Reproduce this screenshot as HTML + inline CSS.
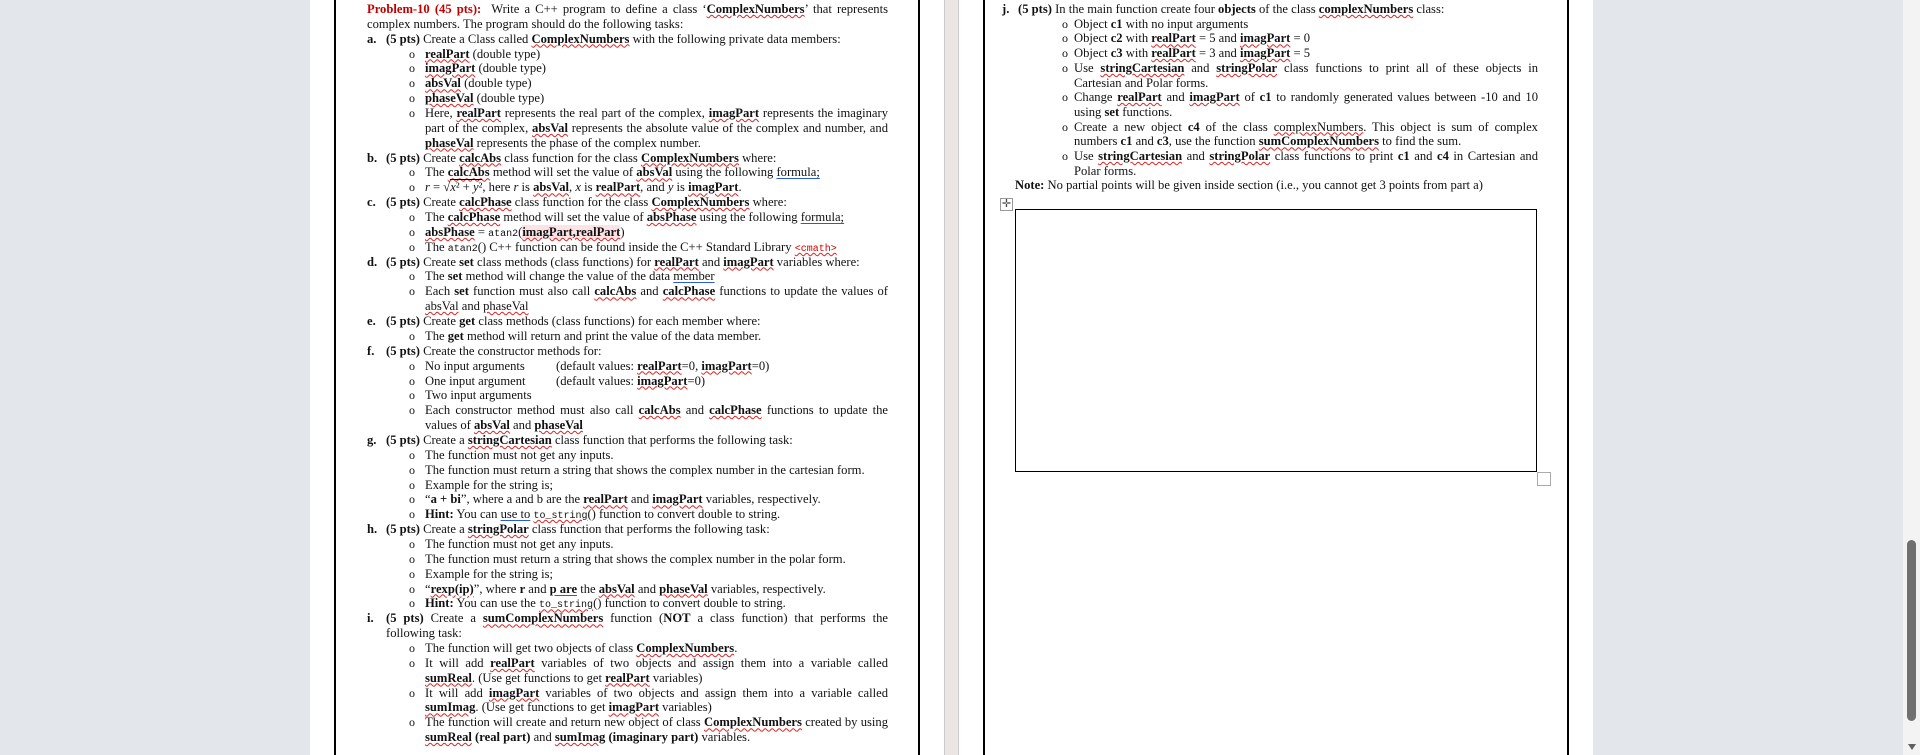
<!DOCTYPE html>
<html><head><meta charset="utf-8"><style>
*{margin:0;padding:0;box-sizing:border-box}
body{width:1920px;height:755px;overflow:hidden;position:relative;background:#e3e7eb;font-family:"Liberation Serif",serif;font-size:12.6px;color:#111}
.pg{position:absolute;top:0;height:755px;background:#fff}
.vl{position:absolute;top:0;height:755px;width:1.5px;background:#000}
.l{position:absolute;white-space:nowrap;line-height:15px;height:15px}
.j{text-align:justify;text-align-last:justify;white-space:nowrap;overflow:visible}
.w{text-decoration:underline wavy #d22;text-decoration-thickness:1px;text-underline-offset:1px}
.u{text-decoration:underline #2a5bd7;text-underline-offset:2px}
b{font-weight:bold}
.m{font-family:"Liberation Mono",monospace;font-size:10px}
.bul{position:absolute;font-size:12px}
</style></head><body>
<div class="pg" style="left:310px;width:634px"></div>
<div class="pg" style="left:944px;width:15px;background:#ebe6e4;border-left:1px solid #ccc;border-right:1px solid #ccc"></div>
<div class="pg" style="left:959px;width:634px"></div>
<div class="vl" style="left:334px"></div><div class="vl" style="left:918px"></div>
<div class="vl" style="left:983px"></div><div class="vl" style="left:1567px"></div>
<div style="position:absolute;left:1903px;top:0;width:17px;height:755px;background:#f3f3f3"></div>
<div style="position:absolute;left:1907px;top:540px;width:9px;height:181px;background:#707070;border-radius:5px"></div>
<div style="position:absolute;left:1908px;top:744px;width:0;height:0;border-left:4px solid transparent;border-right:4px solid transparent;border-top:6px solid #606060"></div>
<div style="position:absolute;left:1015px;top:209px;width:522px;height:263px;border:1.5px solid #000"></div>
<div style="position:absolute;left:1537px;top:472px;width:14px;height:14px;border:1px solid #aaa"></div>
<div style="position:absolute;left:1000px;top:198px;width:13px;height:13px;border:1px solid #999;font-size:11px;line-height:11px;text-align:center;color:#444">✛</div>
<div id="L"></div>
<div id="R"></div>
<script>
let W=888;
const P=(x,t,y,cls)=>`<div class="l ${cls||''}" style="left:${x}px;top:${y}px;${cls&&cls.includes('j')?'width:'+(W-x)+'px':''}">${t}</div>`;
const L=[
['p','<b style="color:#c00000">Problem-10 (45 pts):</b>&nbsp; Write a C++ program to define a class ‘<b class="w">ComplexNumbers</b>’ that represents','j'],
['p','complex numbers. The program should do the following tasks:'],
['h','a.','<b>(5 pts)</b> Create a Class called <b class="w">ComplexNumbers</b> with the following private data members:'],
['o','<b class="w">realPart</b> (double type)'],
['o','<b class="w">imagPart</b> (double type)'],
['o','<b class="w">absVal</b> (double type)'],
['o','<b class="w">phaseVal</b> (double type)'],
['o','Here, <b class="w">realPart</b> represents the real part of the complex, <b class="w">imagPart</b> represents the imaginary','j'],
['oc','part of the complex, <b class="w">absVal</b> represents the absolute value of the complex and number, and','j'],
['oc','<b class="w">phaseVal</b> represents the phase of the complex number.'],
['h','b.','<b>(5 pts)</b> Create <b class="w">calcAbs</b> class function for the class <b class="w">ComplexNumbers</b> where:'],
['o','The <b class="w">calcAbs</b> method will set the value of <b class="w">absVal</b> using the following <span class="u">formula;</span>'],
['o','<i>r</i> = √<span style="border-top:1px solid #000"><i>x</i>² + <i>y</i>²</span>, here <i>r</i> is <b class="w">absVal</b>, <i>x</i> is <b class="w">realPart</b>, and <i>y</i> is <b class="w">imagPart</b>.'],
['h','c.','<b>(5 pts)</b> Create <b class="w">calcPhase</b> class function for the class <b class="w">ComplexNumbers</b> where:'],
['o','The <b class="w">calcPhase</b> method will set the value of <b class="w">absPhase</b> using the following <span class="u">formula;</span>'],
['o','<b class="w">absPhase</b> = <span class="m">atan2</span>(<b class="w" style="background:#fbe3e6">imagPart,realPart</b>)'],
['o','The <span class="m">atan2</span>() C++ function can be found inside the C++ Standard Library <span class="m w" style="color:#c00">&lt;cmath&gt;</span>'],
['h','d.','<b>(5 pts)</b> Create <b>set</b> class methods (class functions) for <b class="w">realPart</b> and <b class="w">imagPart</b> variables where:'],
['o','The <b>set</b> method will change the value of the data <span class="u">member</span>'],
['o','Each <b>set</b> function must also call <b class="w">calcAbs</b> and <b class="w">calcPhase</b> functions to update the values of','j'],
['oc','<span class="w">absVal</span> and <span class="w">phaseVal</span>'],
['h','e.','<b>(5 pts)</b> Create <b>get</b> class methods (class functions) for each member where:'],
['o','The <b>get</b> method will return and print the value of the data member.'],
['h','f.','<b>(5 pts)</b> Create the constructor methods for:'],
['o','No input arguments<span style="position:absolute;left:131px">(default values: <b class="w">realPart</b>=0, <b class="w">imagPart</b>=0)</span>'],
['o','One input argument<span style="position:absolute;left:131px">(default values: <b class="w">imagPart</b>=0)</span>'],
['o','Two input arguments'],
['o','Each constructor method must also call <b class="w">calcAbs</b> and <b class="w">calcPhase</b> functions to update the','j'],
['oc','values of <b class="w">absVal</b> and <b class="w">phaseVal</b>'],
['h','g.','<b>(5 pts)</b> Create a <b class="w">stringCartesian</b> class function that performs the following task:'],
['o','The function must not get any inputs.'],
['o','The function must return a string that shows the complex number in the cartesian form.'],
['o','Example for the string is;'],
['o','“<b>a + bi</b>”, where a and b are the <b class="w">realPart</b> and <b class="w">imagPart</b> variables, respectively.'],
['o','<b>Hint:</b> You can <span class="u">use to</span> <span class="m w">to_string</span>() function to convert double to string.'],
['h','h.','<b>(5 pts)</b> Create a <b class="w">stringPolar</b> class function that performs the following task:'],
['o','The function must not get any inputs.'],
['o','The function must return a string that shows the complex number in the polar form.'],
['o','Example for the string is;'],
['o','“<b class="w">rexp(ip)</b>”, where <b>r</b> and <b class="u">p are</b> the <b class="w">absVal</b> and <b class="w">phaseVal</b> variables, respectively.'],
['o','<b>Hint:</b> You can use the <span class="m w">to_string</span>() function to convert double to string.'],
['h','i.','<b>(5 pts)</b> Create a <b class="w">sumComplexNumbers</b> function (<b>NOT</b> a class function) that performs the','j'],
['c','following task:'],
['o','The function will get two objects of class <b class="w">ComplexNumbers</b>.'],
['o','It will add <b class="w">realPart</b> variables of two objects and assign them into a variable called','j'],
['oc','<b class="w">sumReal</b>. (Use get functions to get <b class="w">realPart</b> variables)'],
['o','It will add <b class="w">imagPart</b> variables of two objects and assign them into a variable called','j'],
['oc','<b class="w">sumImag</b>. (Use get functions to get <b class="w">imagPart</b> variables)'],
['o','The function will create and return new object of class <b class="w">ComplexNumbers</b> created by using','j'],
['oc','<b class="w">sumReal</b> <b>(real part)</b> and <b class="w">sumImag</b> <b>(imaginary part)</b> variables.']
];
function render(arr,X,pitch,top){
 let s='';
 arr.forEach((r,i)=>{const y=top+i*pitch;const t=r[0];
  if(t=='p')s+=P(X.p,r[1],y,r[2]);
  else if(t=='h'){s+=P(X.p,'<b>'+r[1]+'</b>',y);s+=P(X.c,r[2],y,r[3]);}
  else if(t=='c')s+=P(X.c,r[1],y,r[2]);
  else if(t=='o'){s+=`<div class="l bul" style="left:${X.b}px;top:${y}px">o</div>`;s+=P(X.o,r[1],y,r[2]);}
  else if(t=='oc')s+=P(X.o,r[1],y,r[2]);
  else if(t=='n')s+=P(X.n,r[1],y,r[2]);
 });return s;}
document.getElementById('L').innerHTML=render(L,{p:367,c:386,b:409,o:425},14.86,2);
W=1538;
const R=[
['h','j.','<b>(5 pts)</b> In the main function create four <b>objects</b> of the class <b class="w">complexNumbers</b> class:'],
['o','Object <b>c1</b> with no input arguments'],
['o','Object <b>c2</b> with <b class="w">realPart</b> = 5 and <b class="w">imagPart</b> = 0'],
['o','Object <b>c3</b> with <b class="w">realPart</b> = 3 and <b class="w">imagPart</b> = 5'],
['o','Use <b class="w">stringCartesian</b> and <b class="w">stringPolar</b> class functions to print all of these objects in','j'],
['oc','Cartesian and Polar forms.'],
['o','Change <b class="w">realPart</b> and <b class="w">imagPart</b> of <b>c1</b> to randomly generated values between -10 and 10','j'],
['oc','using <b>set</b> functions.'],
['o','Create a new object <b>c4</b> of the class <span class="w">complexNumbers</span>. This object is sum of complex','j'],
['oc','numbers <b>c1</b> and <b>c3</b>, use the function <b class="w">sumComplexNumbers</b> to find the sum.'],
['o','Use <b class="w">stringCartesian</b> and <b class="w">stringPolar</b> class functions to print <b>c1</b> and <b>c4</b> in Cartesian and','j'],
['oc','Polar forms.'],
['n','<b>Note:</b> No partial points will be given inside section (i.e., you cannot get 3 points from part a)']
];
document.getElementById('R').innerHTML=render(R,{p:1002,c:1018,b:1062,o:1074,n:1015},14.7,2);
</script>
</body></html>
